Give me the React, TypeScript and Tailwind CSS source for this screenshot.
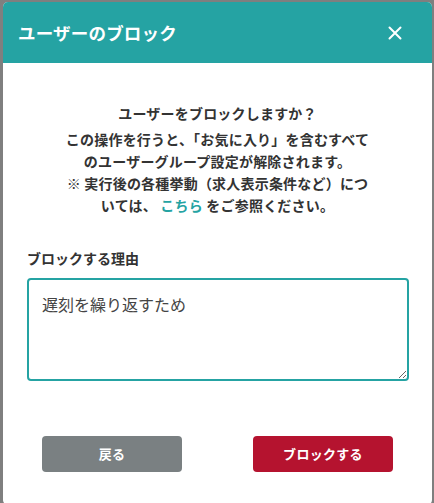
import React from "react";

export default function App() {
  return (
    <div
      className="w-[434px] h-[503px] bg-[#7f7f7f] overflow-hidden pt-[2px] pl-[3px]"
      style={{ fontFamily: '"Noto Sans CJK JP", "Noto Sans", sans-serif' }}
    >
      <div className="w-[429px] h-[503px] bg-white rounded-[5px] overflow-hidden flex flex-col">
        <div className="h-[61px] bg-[#25a3a3] flex items-center justify-between pl-[15px] pr-[30px]">
          <h1 className="text-white text-[17.5px] font-bold leading-none tracking-[0.2px]">ユーザーのブロック</h1>
          <svg width="14" height="14" viewBox="0 0 14 14" fill="none" stroke="white" strokeWidth="2" strokeLinecap="round">
            <path d="M1.5 1.5 L12.5 12.5 M12.5 1.5 L1.5 12.5" />
          </svg>
        </div>
        <div className="flex flex-col items-center text-[#333] font-bold text-[14px] tracking-[0.2px] pt-[39px]">
          <p className="leading-[22px]">ユーザーをブロックしますか？</p>
          <p className="leading-[22px] text-center mt-[4px]">
            この操作を行うと、「お気に入り」を含むすべて
            <br />
            のユーザーグループ設定が解除されます。
            <br />
            ※ 実行後の各種挙動（求人表示条件など）につ
            <br />
            いては、 <span className="text-[#25a3a3]">こちら</span> をご参照ください。
          </p>
        </div>
        <div className="px-[24px] mt-[31px]">
          <label className="block text-[14px] font-bold text-[#333] leading-[22px]">ブロックする理由</label>
          <textarea
            className="mt-[9px] w-[382px] h-[103px] border-2 border-[#25a3a3] rounded-[4px] px-[13px] py-[12px] text-[16px] text-[#444] leading-[24px] outline-none"
            defaultValue="遅刻を繰り返すため"
          />
        </div>
        <div className="flex justify-between px-[39px] mt-[50px]">
          <button className="w-[140px] h-[36px] rounded-[4px] bg-[#7a8082] text-white text-[13px] font-bold tracking-[0.3px]">戻る</button>
          <button className="w-[140px] h-[36px] rounded-[4px] bg-[#b5132f] text-white text-[13px] font-bold tracking-[0.3px]">ブロックする</button>
        </div>
      </div>
    </div>
  );
}
